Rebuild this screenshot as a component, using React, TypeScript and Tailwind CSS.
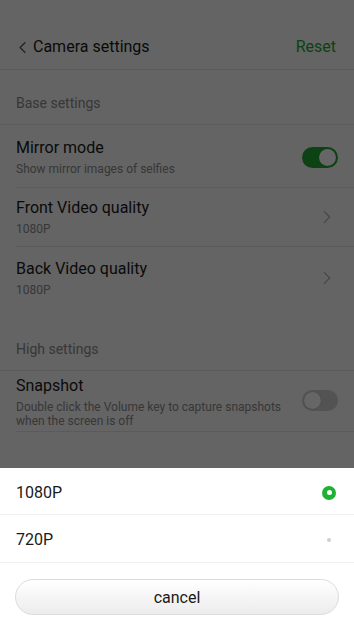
import { ChevronLeft, ChevronRight } from "lucide-react";

function Toggle({ on }: { on: boolean }) {
  return (
    <div
      className={
        on
          ? "flex h-[21px] w-[36px] items-center justify-end rounded-full bg-[#1fa533] p-[2px]"
          : "flex h-[21px] w-[36px] items-center justify-start rounded-full bg-[#cfcfcf] p-[2px]"
      }
    >
      <div className="h-[17px] w-[17px] rounded-full bg-white shadow-[0_0_1px_rgba(0,0,0,0.3)]" />
    </div>
  );
}

function SectionLabel({ text, className }: { text: string; className: string }) {
  return (
    <div className={"flex items-end border-b border-[#e3e3e3] px-4 text-[14px] text-[#8a8a8a] " + className}>
      {text}
    </div>
  );
}

function Row({
  title,
  sub,
  right,
  className,
}: {
  title: string;
  sub: React.ReactNode;
  right: React.ReactNode;
  className: string;
}) {
  return (
    <div className={"ml-4 flex items-center border-b border-[#e3e3e3] pr-4 " + className}>
      <div className="flex-1">
        <div className="text-[16px] leading-[20px] text-[#1a1a1a]">{title}</div>
        <div className="mt-[4px] text-[12px] leading-[14px] text-[#8a8a8a]">{sub}</div>
      </div>
      {right}
    </div>
  );
}

export default function App() {
  return (
    <div className="relative h-[630px] w-[354px] overflow-hidden bg-[#fafafa] font-['Roboto',sans-serif]">
      <div className="flex h-[70px] items-center border-b border-[#e0e0e0] pt-[25px] pl-[13px] pr-[18px]">
        <ChevronLeft className="h-[19px] w-[19px] text-[#555]" strokeWidth={1.6} />
        <span className="ml-[1px] flex-1 text-[16px] text-[#1a1a1a]">Camera settings</span>
        <span className="text-[16px] text-[#1ca533]">Reset</span>
      </div>

      <SectionLabel text="Base settings" className="h-[55px] pb-[10px]" />

      <Row
        title="Mirror mode"
        sub="Show mirror images of selfies"
        right={<Toggle on />}
        className="h-[63px] pt-[2px]"
      />
      <Row
        title="Front Video quality"
        sub="1080P"
        right={<ChevronRight className="h-[22px] w-[22px] text-[#b5b5b5]" strokeWidth={1.3} />}
        className="h-[59px]"
      />
      <Row
        title="Back Video quality"
        sub="1080P"
        right={<ChevronRight className="h-[22px] w-[22px] text-[#b5b5b5]" strokeWidth={1.3} />}
        className="h-[61px] border-b-0"
      />

      <SectionLabel text="High settings" className="h-[63px] pb-[10px]" />

      <Row
        title="Snapshot"
        sub={
          <>
            Double click the Volume key to capture snapshots
            <br />
            when the screen is off
          </>
        }
        right={<Toggle on={false} />}
        className="h-[61px] items-start pt-[5px] [&>div:last-child]:mt-[14px] [&_br+*]:mt-0"
      />

      <div className="absolute inset-0 bg-black/60" />

      <div className="absolute inset-x-0 bottom-0 h-[162px] bg-white">
        <div className="flex h-[47px] items-center justify-between border-b border-[#f0f0f0] px-4 pt-[3px]">
          <span className="text-[16px] text-[#1a1a1a]">1080P</span>
          <span className="mr-[2px] flex h-[14px] w-[14px] items-center justify-center rounded-full bg-[#1fb232]">
            <span className="h-[5px] w-[5px] rounded-full bg-white" />
          </span>
        </div>
        <div className="flex h-[48px] items-center justify-between border-b border-[#f0f0f0] px-4 pt-[3px]">
          <span className="text-[16px] text-[#1a1a1a]">720P</span>
          <span className="mr-[7px] h-[4px] w-[4px] rounded-full bg-[#cfcfcf]" />
        </div>
        <div className="px-[15px] pt-[16px]">
          <button className="flex h-[36px] w-full items-center justify-center rounded-full border border-[#dcdcdc] bg-gradient-to-b from-white to-[#ececec] pt-[1px] text-[16px] text-[#1a1a1a]">
            cancel
          </button>
        </div>
      </div>
    </div>
  );
}
